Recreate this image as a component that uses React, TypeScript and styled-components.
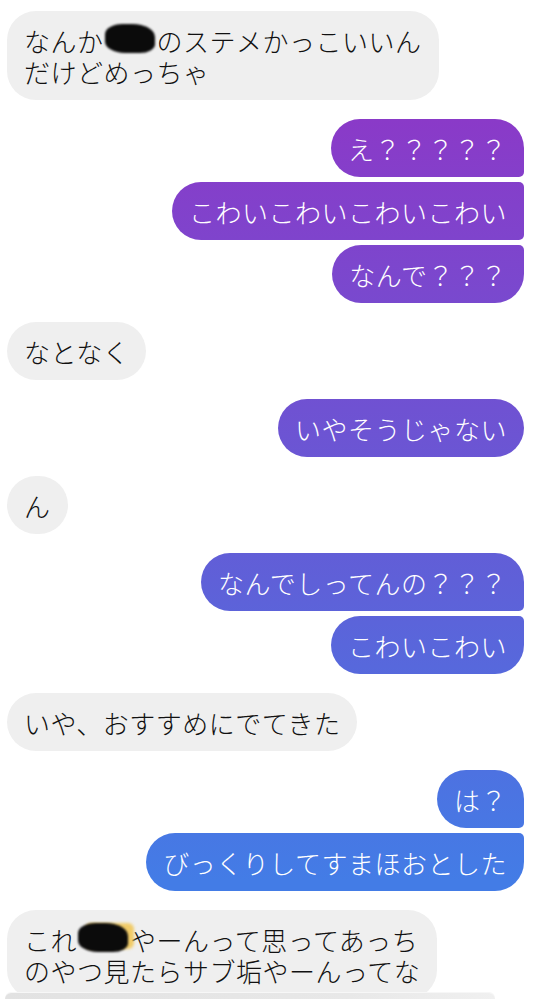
import React from 'react';
import styled, { createGlobalStyle, css } from 'styled-components';

type Side = 'in' | 'out';
type Pos = 'single' | 'first' | 'middle' | 'last';

type Part = string | { redact: number; marker?: boolean };

// a message is a list of lines, each line a list of parts
type Message = Part[][];

type Group = {
  side: Side;
  messages: Message[];
}

const GlobalStyle = createGlobalStyle`
  html, body {
    margin: 0;
    padding: 0;
    background: #fff;
  }
  body {
    font-family: "Noto Sans CJK JP", "Noto Sans", sans-serif;
    -webkit-font-smoothing: antialiased;
  }
`;

const StyledScreen = styled.div`
  height: 100vh;
  display: flex;
  flex-direction: column;
  overflow: hidden;
  background: #fff;
`;

const StyledThread = styled.div`
  flex: 1;
  min-height: 0;
  overflow: hidden;
  display: flex;
  flex-direction: column;
  gap: 19px;
  padding: 11px 12px 0 7px;
`;

const StyledGroup = styled.div<{ $side: Side }>`
  display: flex;
  flex-direction: column;
  gap: 5px;
  align-items: ${props => props.$side === 'out' ? 'flex-end' : 'flex-start'};
`;

const BIG = '29px';
const SMALL = '5px';

const corners = (side: Side, pos: Pos) => {
  if (pos === 'single') return css`border-radius: ${BIG};`;
  const topInner = pos === 'first' ? BIG : SMALL;
  const bottomInner = pos === 'last' ? BIG : SMALL;
  return side === 'out'
    ? css`border-radius: ${BIG} ${topInner} ${bottomInner} ${BIG};`
    : css`border-radius: ${topInner} ${BIG} ${BIG} ${bottomInner};`;
};

const StyledBubble = styled.div<{ $side: Side; $pos: Pos }>`
  box-sizing: border-box;
  padding: 13.5px 17px;
  font-size: 26px;
  font-weight: 300;
  line-height: 31px;
  letter-spacing: 0.5px;
  white-space: nowrap;
  color: ${props => props.$side === 'out' ? '#fff' : '#111'};
  background: ${props => props.$side === 'out'
    ? 'linear-gradient(180deg, #8a3ac8 120px, #5f60d8 580px, #437ce6 880px) fixed'
    : '#efefef'};
  ${props => corners(props.$side, props.$pos)}
`;

const StyledLine = styled.div`
  display: flex;
  align-items: center;
`;

// marker scribble hiding a name: drawn as an empty box
const StyledRedact = styled.span<{ $marker: boolean }>`
  position: relative;
  flex: none;
  height: 26px;

  &::before {
    content: '';
    display: ${props => props.$marker ? 'block' : 'none'};
    position: absolute;
    left: 8px;
    right: -4px;
    top: -3px;
    bottom: 3px;
    background: #f1c85a;
    border-radius: 6px;
    filter: blur(1.5px);
    opacity: 0.9;
  }

  &::after {
    content: '';
    position: absolute;
    left: 1px;
    right: 2px;
    top: -3px;
    bottom: 0;
    background: #0b0b0b;
    border-radius: 35% 45% 30% 40%;
    filter: blur(1.2px);
  }
`;

const StyledComposer = styled.div`
  height: 6px;
  margin: 0 41px 0 5px;
  border-radius: 22px 22px 0 0;
  background: linear-gradient(90deg, #e2e2e2 0%, #e8e8e8 70%, #f0f0f0 100%);
  box-shadow: 0 -1px 0 #f7f7f7;
`;

const THREAD: Group[] = [
  { side: 'in', messages: [[['なんか', { redact: 2 }, 'のステメかっこいいん'], ['だけどめっちゃ']]] },
  { side: 'out', messages: [[['え？？？？？']], [['こわいこわいこわいこわい']], [['なんで？？？']]] },
  { side: 'in', messages: [[['なとなく']]] },
  { side: 'out', messages: [[['いやそうじゃない']]] },
  { side: 'in', messages: [[['ん']]] },
  { side: 'out', messages: [[['なんでしってんの？？？']], [['こわいこわい']]] },
  { side: 'in', messages: [[['いや、おすすめにでてきた']]] },
  { side: 'out', messages: [[['は？']], [['びっくりしてすまほおとした']]] },
  { side: 'in', messages: [[['これ', { redact: 2, marker: true }, 'やーんって思ってあっち'], ['のやつ見たらサブ垢やーんってな']]] },
];

const CHAR_WIDTH = 26.5;

const position = (index: number, count: number): Pos => {
  if (count === 1) return 'single';
  if (index === 0) return 'first';
  if (index === count - 1) return 'last';
  return 'middle';
};

const App: React.FC = () => {
  return (<>
    <GlobalStyle />
    <StyledScreen>
      <StyledThread>
        {THREAD.map((group, groupIndex) => (
          <StyledGroup key={groupIndex} $side={group.side}>
            {group.messages.map((lines, index) => (
              <StyledBubble key={index} $side={group.side} $pos={position(index, group.messages.length)}>
                {lines.map((parts, lineIndex) => (
                  <StyledLine key={lineIndex}>
                    {parts.map((part, partIndex) => typeof part === 'string'
                      ? <span key={partIndex}>{part}</span>
                      : <StyledRedact key={partIndex} $marker={!!part.marker} style={{ width: part.redact * CHAR_WIDTH }} />
                    )}
                  </StyledLine>
                ))}
              </StyledBubble>
            ))}
          </StyledGroup>
        ))}
      </StyledThread>
      <StyledComposer />
    </StyledScreen>
  </>);
};

export default App;
